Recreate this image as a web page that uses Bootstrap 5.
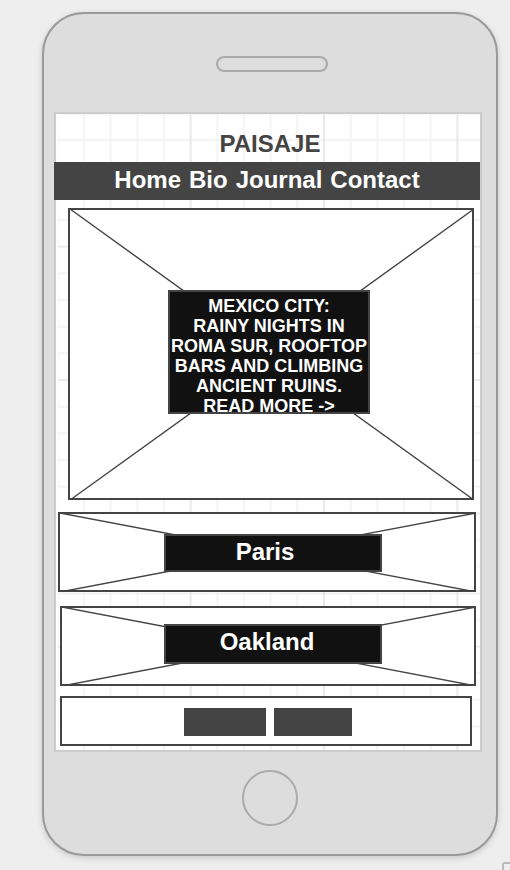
<!DOCTYPE html>
<html lang="en">
<head>
<meta charset="utf-8">
<meta name="viewport" content="width=device-width, initial-scale=1">
<title>Paisaje</title>
<link href="https://cdn.jsdelivr.net/npm/bootstrap@5.3.0/dist/css/bootstrap.min.css" rel="stylesheet">
<style>
body { background: #eee; color: #444; font-family: "Liberation Sans", Arial, sans-serif; }
.canvas { padding: 12px 12px 14px 42px; }
.phone { background: #ddd; border: 2px solid #999; border-radius: 42px; box-shadow: 0 2px 6px rgba(0,0,0,.16); padding: 42px 14px 28px 10px; }
.bezel-top { padding: 0 0 40px 8px; }
.speaker { width: 112px; height: 16px; border: 2px solid #aaa; }
.bezel-bottom { padding: 18px 0 0 4px; }
.home-key { width: 56px; height: 56px; border: 2px solid #aaa; }
.screen { background: #fff; border: 2px solid #ccc; padding-bottom: 4px; }
.grid-lines { left: 2px; width: calc(100% - 2px); }
.brand { font-size: 24px; line-height: 28px; padding: 16px 0 4px 4px; }
.menu { background: #444; font-size: 24px; line-height: 36px; padding-bottom: 2px; margin-left: -2px; }
.frame { background: #fff; border: 2px solid #444; }
.cross { top: -1px; left: 0; width: calc(100% + 2px); height: calc(100% + 3px); }
.cross path { vector-effect: non-scaling-stroke; }
.caption { background: #111; border: 2px solid #444; }
.hero { margin: 8px 6px 0 12px; padding: 80px 102px 84px 98px; }
.story { font-size: 18px; line-height: 20px; height: 124px; padding-top: 4px; }
.place { font-size: 24px; line-height: 32px; padding: 0 12px 4px 0; }
.paris { margin: 12px 4px 0 2px; padding: 20px 92px 18px 104px; }
.paris .place { padding: 0 16px 2px 0; }
.oakland { margin: 14px 4px 0; padding: 16px 92px 20px 102px; }
.pager { margin: 10px 8px 0 4px; padding: 10px 0 8px 4px; }
.pager button { background: #444; height: 28px; width: 82px; }
.pager button + button { width: 78px; }
.next-panel { width: 8px; height: 8px; border: 2px solid #bbb; border-width: 2px 0 0 2px; border-radius: 3px 0 0 0; }
</style>
</head>
<body>
<main class="canvas">
  <div class="phone">
    <div class="bezel-top d-flex justify-content-center"><div class="speaker rounded-pill"></div></div>
    <div class="screen position-relative">
      <svg class="grid-lines position-absolute top-0 h-100" aria-hidden="true">
        <defs>
          <pattern id="grid" width="400" height="400" patternUnits="userSpaceOnUse" patternTransform="translate(-.67 -.67) scale(.33333)">
            <path d="M80 0V400M160 0V400M240 0V400M320 0V400M0 80H400M0 160H400M0 240H400M0 320H400" stroke="#f3f3f3" stroke-width="6"/>
            <path d="M0 0V400M400 0V400M0 0H400M0 400H400" stroke="#e6e6e6" stroke-width="5"/>
          </pattern>
        </defs>
        <rect width="100%" height="100%" fill="url(#grid)"/>
      </svg>
      <div class="position-relative">
        <h1 class="brand fw-bold text-center m-0">PAISAJE</h1>
        <nav class="menu d-flex justify-content-center gap-2 fw-bold">
          <a class="text-white text-decoration-none" href="#home">Home</a>
          <a class="text-white text-decoration-none" href="#bio">Bio</a>
          <a class="text-white text-decoration-none" href="#journal">Journal</a>
          <a class="text-white text-decoration-none" href="#contact">Contact</a>
        </nav>
        <section class="frame hero position-relative">
          <svg class="cross position-absolute" viewBox="0 0 100 100" preserveAspectRatio="none" aria-hidden="true"><path d="M0 0L100 100M100 0L0 100" stroke="#444" stroke-width="1.4"/></svg>
          <div class="caption story position-relative text-white text-center text-nowrap fw-bold d-flex flex-column align-items-center">
            <span>MEXICO CITY:</span>
            <span>RAINY NIGHTS IN</span>
            <span>ROMA SUR, ROOFTOP</span>
            <span>BARS AND CLIMBING</span>
            <span>ANCIENT RUINS.</span>
            <a class="text-white text-decoration-none" href="#mexico-city">READ MORE -&gt;</a>
          </div>
        </section>
        <section class="frame paris position-relative">
          <svg class="cross position-absolute" viewBox="0 0 100 100" preserveAspectRatio="none" aria-hidden="true"><path d="M0 0L100 100M100 0L0 100" stroke="#444" stroke-width="1.4"/></svg>
          <a class="caption place d-block position-relative text-white text-center text-decoration-none fw-bold" href="#paris">Paris</a>
        </section>
        <section class="frame oakland position-relative">
          <svg class="cross position-absolute" viewBox="0 0 100 100" preserveAspectRatio="none" aria-hidden="true"><path d="M0 0L100 100M100 0L0 100" stroke="#444" stroke-width="1.4"/></svg>
          <a class="caption place d-block position-relative text-white text-center text-decoration-none fw-bold" href="#oakland">Oakland</a>
        </section>
        <div class="frame pager d-flex justify-content-center gap-2">
          <button type="button" class="border-0 p-0" aria-label="Previous"></button>
          <button type="button" class="border-0 p-0" aria-label="Next"></button>
        </div>
      </div>
    </div>
    <div class="bezel-bottom d-flex justify-content-center"><div class="home-key rounded-circle"></div></div>
  </div>
</main>
<div class="next-panel position-fixed bottom-0 end-0"></div>
<script src="https://cdn.jsdelivr.net/npm/bootstrap@5.3.0/dist/js/bootstrap.bundle.min.js"></script>
</body>
</html>
